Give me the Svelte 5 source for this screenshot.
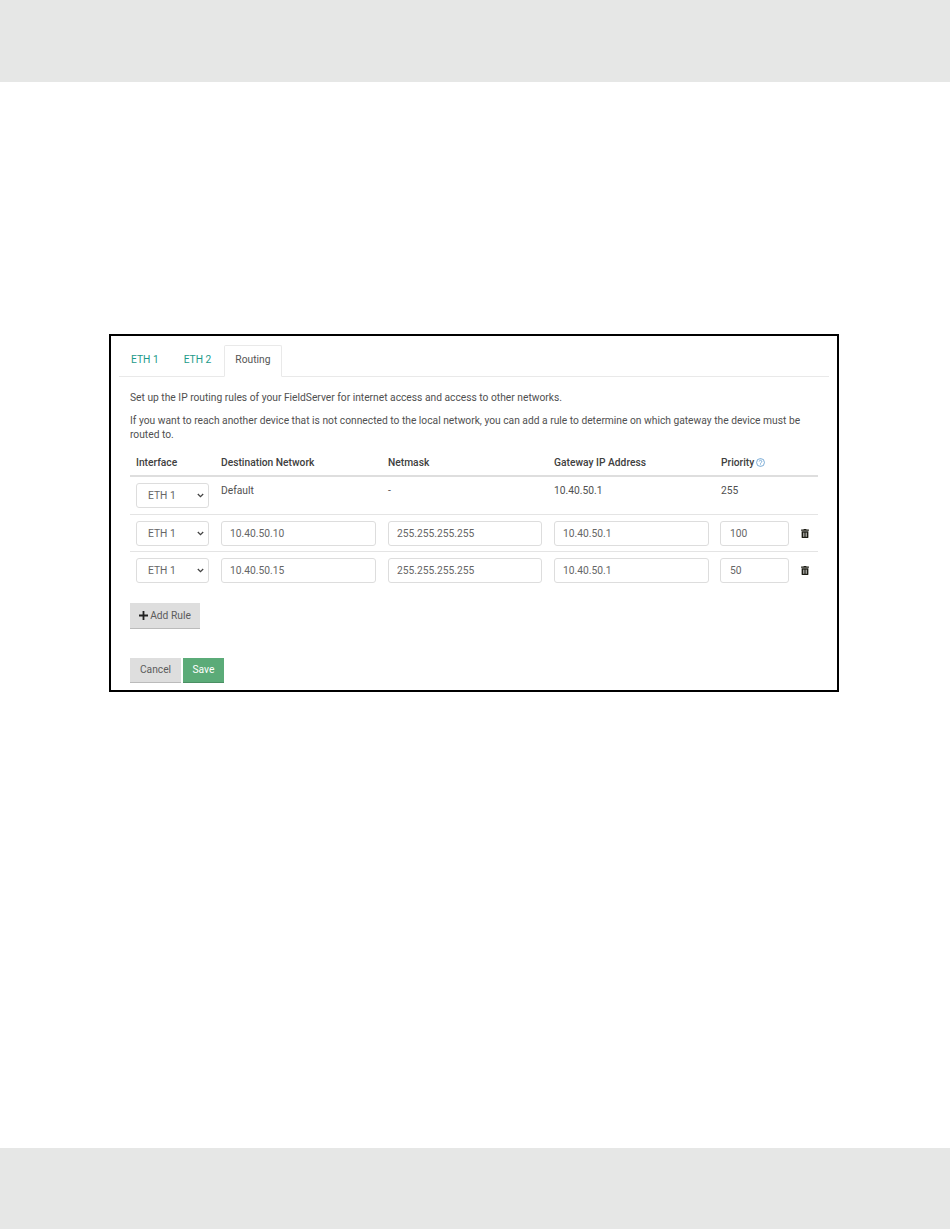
<script>
  const rules = [
    { dest: "10.40.50.10", mask: "255.255.255.255", gw: "10.40.50.1", prio: "100" },
    { dest: "10.40.50.15", mask: "255.255.255.255", gw: "10.40.50.1", prio: "50" }
  ];
</script>

<div class="page">
  <div class="band"></div>
  <main class="content">
    <section class="frame">
      <nav class="tabs">
        <span class="tab">ETH 1</span>
        <span class="tab">ETH 2</span>
        <span class="tab active">Routing</span>
      </nav>
      <div class="body">
        <p class="intro">Set up the IP routing rules of your FieldServer for internet access and access to other networks.</p>
        <p class="intro second">If you want to reach another device that is not connected to the local network, you can add a rule to determine on which gateway the device must be routed to.</p>

        <div class="row head">
          <span>Interface</span>
          <span>Destination Network</span>
          <span>Netmask</span>
          <span>Gateway IP Address</span>
          <span class="prio">Priority
            <svg width="9" height="9" viewBox="0 0 16 16" fill="none" stroke="#3f86c4" stroke-width="1.200">
              <circle cx="8" cy="8" r="7" />
              <path d="M5.700 6.300a2.300 2.300 0 1 1 3.600 1.900c-.9.600-1.300 1-1.300 2" />
              <path d="M8 11.400v1.300" />
            </svg>
          </span>
        </div>

        <div class="row first">
          <select class="iface"><option>ETH 1</option></select>
          <span class="cell">Default</span>
          <span class="cell">-</span>
          <span class="cell">10.40.50.1</span>
          <span class="cell">255</span>
        </div>

        {#each rules as rule, i}
          <div class="row edit" class:last={i === rules.length - 1}>
            <select class="iface"><option>ETH 1</option></select>
            <input type="text" value={rule.dest} />
            <input type="text" value={rule.mask} />
            <input type="text" value={rule.gw} />
            <input class="short" type="text" value={rule.prio} />
            <svg class="trash" width="8" height="9" viewBox="0 0 448 512" fill="#1c1c14">
              <path d="M32 464a48 48 0 0 0 48 48h288a48 48 0 0 0 48-48V128H32zm272-256a16 16 0 0 1 32 0v224a16 16 0 0 1-32 0zm-96 0a16 16 0 0 1 32 0v224a16 16 0 0 1-32 0zm-96 0a16 16 0 0 1 32 0v224a16 16 0 0 1-32 0zM432 32H312l-9.400-18.700A24 24 0 0 0 281.100 0H166.800a23.700 23.700 0 0 0-21.400 13.300L136 32H16A16 16 0 0 0 0 48v32a16 16 0 0 0 16 16h416a16 16 0 0 0 16-16V48a16 16 0 0 0-16-16z" />
            </svg>
          </div>
        {/each}

        <button class="btn add">
          <svg width="9" height="9" viewBox="0 0 10 10" fill="#222"><path d="M4 0h2v4h4v2H6v4H4V6H0V4h4z" /></svg>
          Add Rule
        </button>

        <div class="actions">
          <button class="btn cancel">Cancel</button>
          <button class="btn save">Save</button>
        </div>
      </div>
    </section>
  </main>
  <div class="band bottom"></div>
</div>

<style>
  :global(body) {
    margin: 0;
    background: #fff;
  }

  .page {
    display: flex;
    flex-direction: column;
    min-height: 1229px;
    font-family: Roboto, "Liberation Sans", sans-serif;
    font-size: 10.25px;
    color: #505050;
  }

  .band {
    height: 82px;
    background: #e6e7e6;
  }

  .band.bottom {
    height: 81px;
  }

  .content {
    flex: 1;
    padding: 252px 111px 0 109px;
  }

  .frame {
    box-sizing: border-box;
    width: 730px;
    height: 358px;
    border: 2px solid #000;
    padding: 9px 8px 0;
  }

  .tabs {
    display: flex;
    height: 31px;
    border-bottom: 1px solid #e9e9e9;
  }

  .tab {
    box-sizing: border-box;
    height: 32px;
    padding: 9px 12px 0;
    margin-right: 1px;
    line-height: 12px;
    color: #1c9a8a;
  }

  .tab.active {
    width: 58px;
    background: #fff;
    border: 1px solid #e9e9e9;
    border-bottom-color: #fff;
    border-radius: 2px 2px 0 0;
    padding: 8px 0 0 10px;
    color: #555;
  }

  .body {
    padding: 14px 0 0 11px;
    width: 688px;
  }

  .intro {
    margin: 0 0 9px;
    line-height: 14px;
  }

  .intro.second {
    margin-bottom: 8px;
  }

  .row {
    display: grid;
    grid-template-columns: 73px 155px 154px 155px 69px 1fr;
    column-gap: 12px;
    padding: 0 6px;
    align-items: center;
    border-bottom: 1px solid #e4e4e4;
  }

  .row.head {
    height: 25px;
    border-bottom: 2px solid #dedede;
    font-weight: 500;
    color: #404040;
  }

  .prio {
    display: flex;
    align-items: center;
    gap: 2px;
  }

  .row.first {
    height: 37px;
    align-items: start;
  }

  .row.first .iface {
    margin-top: 6px;
  }

  .cell {
    margin-top: 8px;
    line-height: 12px;
  }

  .row.edit {
    height: 36px;
  }

  .row.edit.last {
    border-bottom: 0;
  }

  select,
  input {
    box-sizing: border-box;
    height: 25px;
    width: 100%;
    font: inherit;
    color: #666;
    background: #fff;
    border: 1px solid #ddd;
    border-radius: 3px;
    outline: none;
  }

  select {
    appearance: none;
    padding: 0 0 0 11px;
    background: #fff url("data:image/svg+xml,%3Csvg xmlns='http://www.w3.org/2000/svg' width='7' height='5' viewBox='0 0 7 5'%3E%3Cpath d='M.8 1l2.700 2.600L6.200 1' fill='none' stroke='%23444' stroke-width='1.300'/%3E%3C/svg%3E") no-repeat right 4px center;
  }

  input {
    padding: 0 8px;
  }

  input.short {
    margin-left: -1px;
    padding-left: 9px;
  }

  .trash {
    justify-self: center;
    margin-left: -4px;
  }

  .btn {
    box-sizing: border-box;
    border: 0;
    border-bottom: 1px solid #bbb;
    font: inherit;
    color: #5c5c5c;
    background: #dedede;
    padding: 0 0 1px;
  }

  .add {
    display: flex;
    align-items: center;
    justify-content: center;
    gap: 2px;
    width: 70px;
    height: 26px;
    margin-top: 15px;
  }

  .actions {
    display: flex;
    gap: 2px;
    margin-top: 29px;
  }

  .cancel {
    width: 51px;
    height: 25px;
  }

  .save {
    width: 41px;
    height: 25px;
    background: #5bab78;
    border-bottom-color: #4a8f63;
    color: #fff;
  }
</style>
